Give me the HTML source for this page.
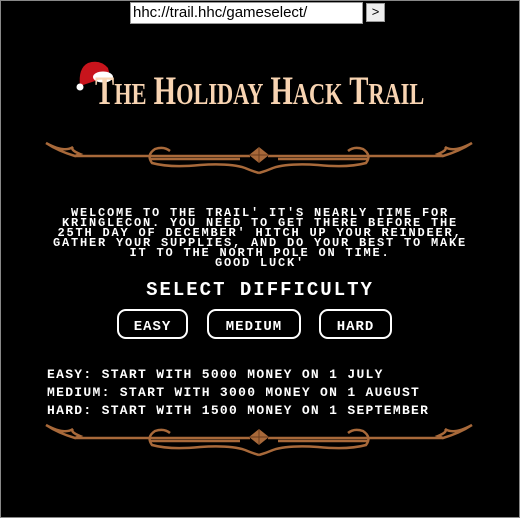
<!DOCTYPE html>
<html><head><meta charset="utf-8"><style>
html,body{margin:0;padding:0;background:#000;}
body{width:520px;height:518px;position:relative;overflow:hidden;}
.frame{position:absolute;left:0;top:0;width:518px;height:516px;border:1px solid #888;}
.url{position:absolute;left:130px;top:2px;width:229px;height:20px;background:#fff;border:1px solid #999;font:15px "Liberation Sans",sans-serif;line-height:20px;padding-left:2px;color:#000;box-sizing:content-box;}
.go{position:absolute;left:366px;top:3px;width:17px;height:17px;background:#eee;border:1px solid #999;font:13px "Liberation Sans",sans-serif;text-align:center;line-height:16px;}
.title{position:absolute;left:95px;top:71px;font:bold 40px "Liberation Serif",serif;line-height:40px;color:#f8d4b2;white-space:nowrap;transform:scaleX(0.72);transform-origin:0 0;}
.title span{font-size:31px;}
.mono{font-family:"Liberation Mono",monospace;font-weight:bold;color:#fff;white-space:nowrap;}
.p{position:absolute;left:0;width:520px;text-align:center;top:208px;font-size:12px;line-height:10px;letter-spacing:1.8px;}
.sel{position:absolute;left:0;width:520px;text-align:center;top:279px;font-size:19px;letter-spacing:2px;}
.btn{position:absolute;top:309px;height:26px;border:2.5px solid #fff;border-radius:9px;font-size:14px;letter-spacing:1px;text-align:center;line-height:33px;}
.l{position:absolute;left:47px;font-size:13px;letter-spacing:1.3px;}
svg{position:absolute;left:0;}
</style></head><body>
<div class="frame"></div>
<div class="url">hhc://trail.hhc/gameselect/</div>
<div class="go">&gt;</div>
<svg style="top:52px;left:58px" width="60" height="45" viewBox="0 0 60 45">
<path d="M22 34 Q20 16 30 11 Q42 7 50 16 L52 24 Z" fill="#c8141c"/>
<ellipse cx="45" cy="25" rx="10" ry="5.5" fill="#fff"/>
<circle cx="22" cy="35" r="3.5" fill="#fff"/>
</svg>
<div class="title">T<span>HE</span> H<span>OLIDAY</span> H<span>ACK</span> T<span>RAIL</span></div>
<svg id="o1" style="top:135px" width="520" height="40" viewBox="0 0 520 40">
<g fill="none" stroke="#a8693a" stroke-width="2.5">
<g id="half">
<path d="M46 8 Q58 16 75 21 L80 19 Q70 15 73 12 Q64 18 46 8"/>
<line x1="75" y1="21" x2="250" y2="21"/>
<line x1="150" y1="24" x2="240" y2="24"/>
<path d="M170 16 Q164 11 155 14 Q146 20 152 28 Q170 33 200 30 Q230 28 245 33 Q252 36 259 38"/>
</g>
<use href="#half" transform="translate(518 0) scale(-1 1)"/>
</g>
<path d="M259 12 L269 20 L259 28 L249 20 Z" fill="#a8693a"/>
<path d="M259 12 L259 28 M249 20 L269 20" stroke="#6b3d1d" stroke-width="1"/>
</svg>
<div class="mono p">WELCOME TO THE TRAIL' IT'S NEARLY TIME FOR<br>KRINGLECON. YOU NEED TO GET THERE BEFORE THE<br>25TH DAY OF DECEMBER' HITCH UP YOUR REINDEER,<br>GATHER YOUR SUPPLIES, AND DO YOUR BEST TO MAKE<br>IT TO THE NORTH POLE ON TIME.<br>GOOD LUCK'</div>
<div class="mono sel">SELECT DIFFICULTY</div>
<div class="mono btn" style="left:117px;width:67px">EASY</div>
<div class="mono btn" style="left:207px;width:90px">MEDIUM</div>
<div class="mono btn" style="left:319px;width:69px">HARD</div>
<div class="mono l" style="top:367px">EASY: START WITH 5000 MONEY ON 1 JULY</div>
<div class="mono l" style="top:385px">MEDIUM: START WITH 3000 MONEY ON 1 AUGUST</div>
<div class="mono l" style="top:403px">HARD: START WITH 1500 MONEY ON 1 SEPTEMBER</div>
<svg style="top:417px" width="520" height="40" viewBox="0 0 520 40">
<g fill="none" stroke="#a8693a" stroke-width="2.5">
<use href="#half"/>
<use href="#half" transform="translate(518 0) scale(-1 1)"/>
</g>
<path d="M259 12 L269 20 L259 28 L249 20 Z" fill="#a8693a"/>
<path d="M259 12 L259 28 M249 20 L269 20" stroke="#6b3d1d" stroke-width="1"/>
</svg>
</body></html>
